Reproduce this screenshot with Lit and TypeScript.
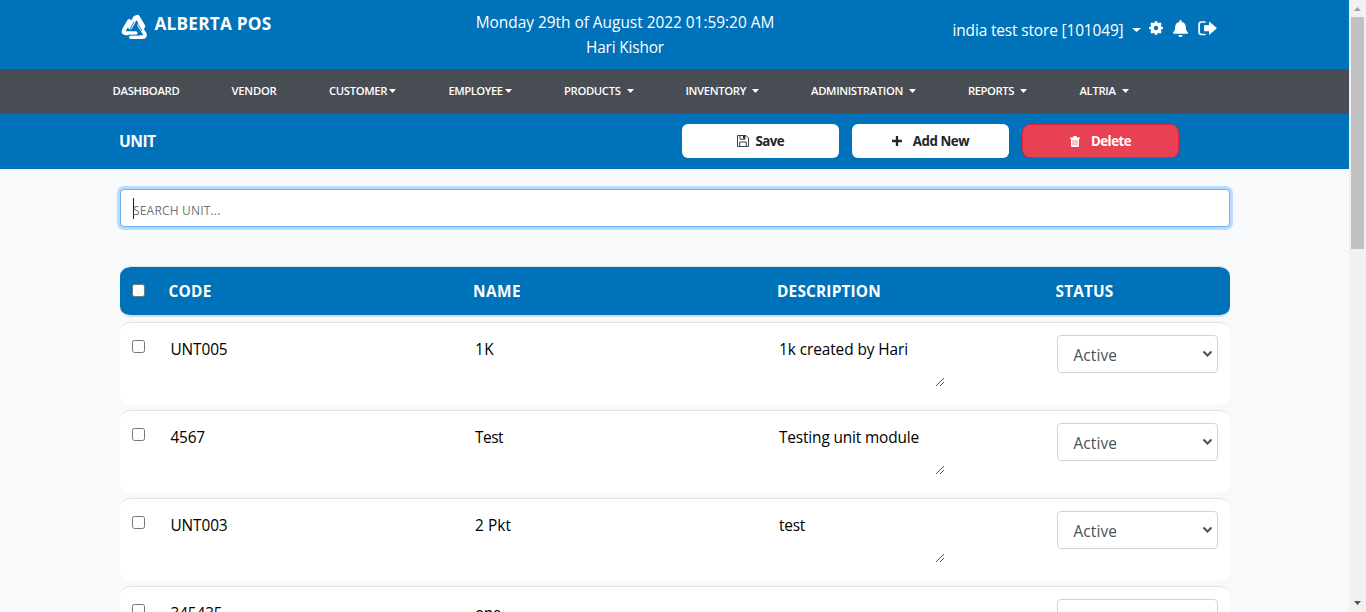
import { LitElement, html, css } from "lit";
import { customElement, property } from "lit/decorators.js";

const FONT = css`"Open Sans", "Noto Sans", sans-serif`;

interface Unit { code: string; name: string; desc: string; }

const UNITS: Unit[] = [
  { code: "UNT005", name: "1K", desc: "1k created by Hari" },
  { code: "4567", name: "Test", desc: "Testing unit module" },
  { code: "UNT003", name: "2 Pkt", desc: "test" },
  { code: "345435", name: "one", desc: "" },
];

const MENU = [
  { label: "DASHBOARD", cls: "m0", caret: "" },
  { label: "VENDOR", cls: "m1", caret: "" },
  { label: "CUSTOMER", cls: "m2", caret: "tight" },
  { label: "EMPLOYEE", cls: "m3", caret: "tight" },
  { label: "PRODUCTS", cls: "m4", caret: "loose" },
  { label: "INVENTORY", cls: "m5", caret: "loose" },
  { label: "ADMINISTRATION", cls: "m6", caret: "loose" },
  { label: "REPORTS", cls: "m7", caret: "loose" },
  { label: "ALTRIA", cls: "m8", caret: "loose" },
];

/** Text stretched or squeezed to a fixed advance width. */
@customElement("fit-text")
export class FitText extends LitElement {
  @property() text = "";
  @property({ type: Number }) w = 0;
  static styles = css`
    :host { display: inline-block; white-space: nowrap; }
    .t { display: inline-block; white-space: pre; }
  `;
  render() { return html`<span class="t">${this.text}</span>`; }
  async updated() {
    await document.fonts.ready;
    const el = this.renderRoot.querySelector(".t") as HTMLElement;
    el.style.letterSpacing = "0px";
    const natural = el.getBoundingClientRect().width;
    if (natural && this.w) {
      el.style.letterSpacing = `${(this.w - natural) / this.text.length}px`;
    }
  }
}

@customElement("app-root")
export class AppRoot extends LitElement {
  static styles = css`
    :host { display: flex; width: 1366px; height: 612px; overflow: hidden; font-family: ${FONT}; font-size: 15.4px; color: #000; background: #f8f9fb; }
    * { box-sizing: border-box; }
    svg { display: block; }
    .page { width: 1349px; height: 612px; overflow: hidden; }
    .top { height: 69px; background: #0072b9; color: #fff; display: grid; grid-template-columns: 450px 350px 1fr; }
    .brand { display: flex; padding: 12px 0 0 120px; gap: 6.5px; align-items: flex-start; font-weight: 700; font-size: 17.3px; line-height: 24px; }
    .logo { width: 28px; height: 28px; flex: none; }
    .when { text-align: center; line-height: 25px; padding-top: 10px; }
    .store { display: flex; align-items: flex-start; padding: 18px 0 0 152.5px; line-height: 25px; }
    .store .caret { margin: 10px 8px 0 8px; }
    .caret { width: 9px; height: 4px; flex: none; }
    .gear { margin: 3px 10px 0 0.5px; }
    .bell { margin: 2px 10px 0 0; }
    .out { margin-top: 1.5px; }
    .nav { height: 45px; background: #474d53; color: #fff; font-size: 11.3px; font-weight: 600; display: flex; padding-left: 112.5px; line-height: 44px; }
    .item { display: flex; flex: none; }
    .item .caret { width: 7px; height: 4px; margin-top: 20px; }
    .item .tight { margin-left: 2px; }
    .item .loose { margin-left: 6px; }
    .m0 { width: 119px; } .m1 { width: 97.5px; } .m2 { width: 119.5px; } .m3 { width: 115.5px; }
    .m4 { width: 121.5px; } .m5 { width: 125.5px; } .m6 { width: 157px; } .m7 { width: 111.5px; }
    .bar { height: 55px; background: #0072b9; color: #fff; display: flex; padding: 10px 170px 0 119px; font-weight: 700; }
    .title { flex: 1; line-height: 34px; font-size: 15.6px; }
    .btns { display: flex; gap: 13px; }
    .btn { width: 157px; height: 34px; border-radius: 6px; background: #fff; color: #212529; display: flex; align-items: center; justify-content: center; font-size: 13.3px; }
    .btn.del { background: #e84153; color: #fff; border: 1px solid #e02140; border-radius: 8px; }
    .save svg { margin-right: 6.5px; }
    .add svg { margin-right: 11px; }
    .del svg { margin-right: 11px; }
    .body { padding: 20px 119px 0 120px; }
    .search { height: 38px; border: 1px solid #66b2f7; border-radius: 4px; background: #fff; box-shadow: 0 0 0 3px #b8dafc; font-size: 12px; line-height: 42px; color: #6c757d; padding-left: 12px; display: flex; }
    .cursor { width: 1px; height: 21px; background: #222; margin: 8px -1px 0 0; }
    .grid { display: grid; grid-template-columns: 48.5px 304.5px 304px 278.5px 1fr; width: 1110px; }
    .head { margin-top: 39px; height: 51px; border-top: 1px solid #dbe2e8; border-bottom: 2px solid #d6dde3; border-radius: 10px; background: #0072b9; background-clip: padding-box; color: #fff; font-weight: 700; line-height: 50px; }
    .row { height: 83px; margin-top: 5px; border-radius: 10px; border-top: 1px solid #dee2e6; background: #fff; }
    .box { width: 13px; height: 13px; border: 1px solid #767676; border-radius: 2.5px; background: #fff; margin: 17px 0 0 12px; }
    .txt { line-height: 24px; padding: 15px 0 0 2px; }
    .area { line-height: 24px; padding: 15px 0 0 2px; }
    .grip { width: 10px; height: 10px; margin: 15px 0 0 156px; }
    .area .line { height: 24px; }
    .sel { margin: 12px 0 0 1px; width: 161px; height: 38px; border: 1px solid #ced4da; border-radius: 4px; color: #495057; padding: 0 4px 0 16px; line-height: 40px; display: flex; justify-content: space-between; }
    .sel svg { margin-top: 14px; }
    .scroll { width: 17px; height: 612px; background: #f1f1f1; display: flex; flex-direction: column; align-items: center; }
    .up { margin-top: 7px; }
    .thumb { width: 13px; height: 232px; background: #c1c1c1; margin-top: 6px; }
    .down { margin-top: auto; margin-bottom: 7px; }
  `;

  caret(cls = "") {
    return html`<svg class="caret ${cls}" viewBox="0 0 8 4" preserveAspectRatio="none"><path d="M0 0H8L4 4Z" fill="#fff"/></svg>`;
  }

  fit(text: string, w: number) {
    return html`<fit-text .text=${text} .w=${w}></fit-text>`;
  }

  render() {
    const menuW = [67, 45, 58, 54, 56.5, 60.5, 92, 46, 36];
    const codeW = [57, 34.5, 57, 52];
    const nameW = [19, 28, 36, 26];
    const descW = [129, 140, 26, 0];
    return html`
      <div class="page">
        <div class="top">
          <div class="brand">
            <svg class="logo" viewBox="0 0 28 28" fill="none" stroke="#fff" stroke-linecap="round" stroke-linejoin="round">
              <path d="M10.2 15L15.2 6L17.5 5.2L23 14.5" stroke-width="4.6"/>
              <path d="M9.2 9L4 18Q2.8 21.2 6 21.2H15.5" stroke-width="4"/>
              <path d="M11 25.2H22.5Q26 25 24.6 21.5L19 13" stroke-width="3.8"/>
              <path d="M10.4 16.4L13.8 10.2M16.2 9.8L21.8 18.6M8.6 23.1H19.4" stroke="#0072b9" stroke-width=".9"/>
              <path d="M15.6 12.4L19.6 19H11.8Z" fill="#0072b9" stroke="none"/>
            </svg>
            ${this.fit("ALBERTA POS", 117)}
          </div>
          <div class="when">
            <div>${this.fit("Monday 29th of August 2022 01:59:20 AM", 298.5)}</div>
            <div>${this.fit("Hari Kishor", 78)}</div>
          </div>
          <div class="store">
            ${this.fit("india test store [101049]", 171)}${this.caret()}
            <svg class="gear" width="14" height="14" viewBox="0 0 512 512"><path fill="#fff" fill-rule="evenodd" d="M206 6h100l10 66 32 14 56-38 62 62-38 56 14 32 66 10v96l-66 10-14 32 38 56-62 62-56-38-32 14-10 66h-100l-10-66-32-14-56 38-62-62 38-56-14-32-66-10v-96l66-10 14-32-38-56 62-62 56 38 32-14zM256 176a80 80 0 1 0 0 160a80 80 0 1 0 0-160z"/></svg>
            <svg class="bell" width="15" height="17" viewBox="0 0 448 512"><path fill="#fff" d="M224 512c35.32 0 63.97-28.65 63.97-64H160.03c0 35.35 28.65 64 63.97 64zm215.39-149.71c-19.32-20.76-55.47-51.99-55.47-154.29 0-77.7-54.48-139.9-127.94-155.16V32c0-17.67-14.32-32-31.98-32s-31.98 14.33-31.98 32v20.84C118.56 68.1 64.08 130.3 64.08 208c0 102.3-36.15 133.53-55.47 154.29-6 6.45-8.66 14.16-8.61 21.71.11 16.4 12.98 32 32.1 32h383.8c19.12 0 32-15.6 32.1-32 .05-7.55-2.61-15.27-8.61-21.71z"/></svg>
            <svg class="out" width="19" height="17" viewBox="0 0 19 17"><path d="M7 2H3.5Q1.1 2 1.1 4.4V12.1Q1.1 14.5 3.5 14.5H7" fill="none" stroke="#fff" stroke-width="1.7" stroke-linecap="round"/><path fill="#fff" stroke="#fff" stroke-linejoin="round" d="M6.5 5.7H11.5V2.2L18.4 8.2L11.5 14.3V10.8H6.5Z"/></svg>
          </div>
        </div>
        <div class="nav">
          ${MENU.map((m, i) => html`<div class="item ${m.cls}">${this.fit(m.label, menuW[i])}${m.caret ? this.caret(m.caret) : ""}</div>`)}
        </div>
        <div class="bar">
          <div class="title">${this.fit("UNIT", 36.5)}</div>
          <div class="btns">
            <div class="btn save"><svg width="12" height="12" viewBox="0 0 12 12" fill="none" stroke="#34434f"><path d="M.5.5H9L11.5 3V11.5H.5Z"/><path d="M3 .8V4.2H8V.8M2.7 11V7H9.3V11"/><path d="M6 1H8V3.6H6Z" fill="#212529" stroke="none"/></svg>${this.fit("Save", 28.5)}</div>
            <div class="btn add"><svg width="10" height="10" viewBox="0 0 10 10"><path d="M5 0V10M0 5H10" stroke="#212529" stroke-width="2.3"/></svg>${this.fit("Add New", 56.5)}</div>
            <div class="btn del"><svg width="10" height="11" viewBox="0 0 10 11"><path fill="#fff" fill-rule="evenodd" d="M0 1.4H3L3.6 0H6.4L7 1.4H10V2.7H9V10Q9 11 8 11H2Q1 11 1 10V2.7H0ZM2.7 4V9.5H3.3V4ZM4.7 4V9.5H5.3V4ZM6.7 4V9.5H7.3V4Z"/></svg>${this.fit("Delete", 40)}</div>
          </div>
        </div>
        <div class="body">
          <div class="search"><span class="cursor"></span>${this.fit("SEARCH UNIT...", 87.5)}</div>
          <div class="grid head">
            <div><div class="box"></div></div>
            <div>${this.fit("CODE", 43)}</div>
            <div>${this.fit("NAME", 48)}</div>
            <div>${this.fit("DESCRIPTION", 104)}</div>
            <div>${this.fit("STATUS", 58)}</div>
          </div>
          ${UNITS.map((u, i) => html`
            <div class="grid row">
              <div><div class="box"></div></div>
              <div class="txt">${this.fit(u.code, codeW[i])}</div>
              <div class="txt">${this.fit(u.name, nameW[i])}</div>
              <div class="area">
                <div class="line">${u.desc ? this.fit(u.desc, descW[i]) : ""}</div>
                <svg class="grip" viewBox="0 0 10 10"><path d="M1 9L9 1M5 9L9 5" stroke="#555" stroke-width="1"/></svg>
              </div>
              <div><div class="sel">${this.fit("Active", 43.5)}<svg width="11" height="8" viewBox="0 0 11 8"><path d="M1.5 1.5L5.5 5.5L9.5 1.5" fill="none" stroke="#495057" stroke-width="2"/></svg></div></div>
            </div>`)}
        </div>
      </div>
      <div class="scroll">
        <svg class="up" width="7" height="4" viewBox="0 0 7 4"><path d="M0 4L3.5 0L7 4Z" fill="#a3a3a3"/></svg>
        <div class="thumb"></div>
        <svg class="down" width="7" height="4" viewBox="0 0 7 4"><path d="M0 0H7L3.5 4Z" fill="#505050"/></svg>
      </div>
    `;
  }
}
